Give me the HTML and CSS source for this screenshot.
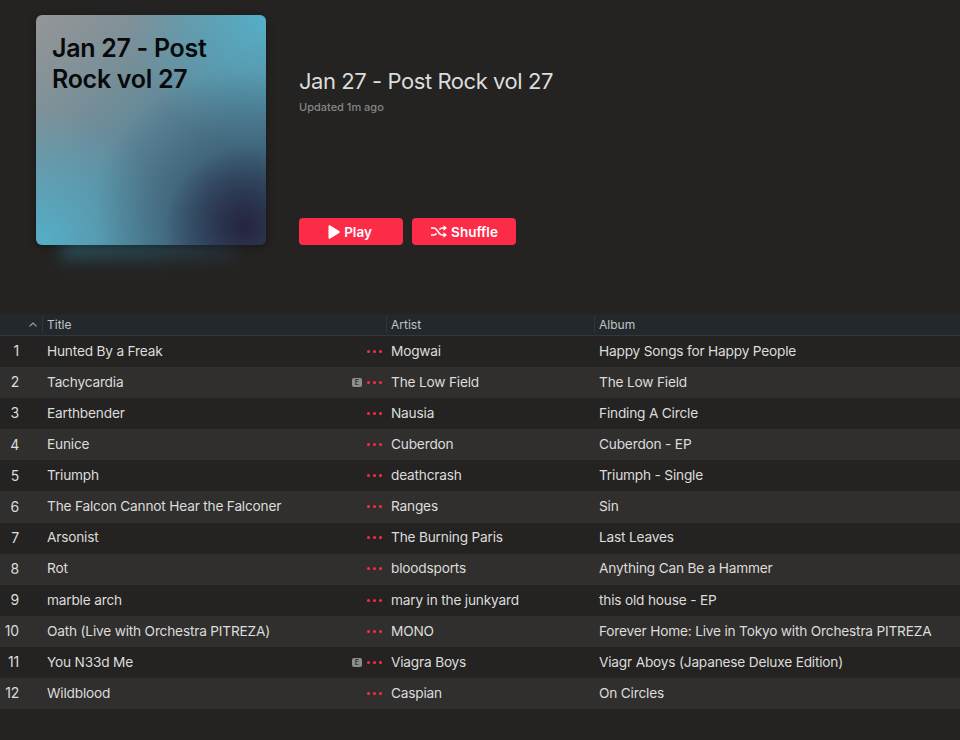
FILE: index.html
```html
<!DOCTYPE html>
<html lang="en">
<head>
  <meta charset="UTF-8">
  <title>Jan 27 - Post Rock vol 27</title>
  <link rel="stylesheet" href="styles.css">
</head>
<body>
  <!-- Playlist header -->
  <section class="hero">
    <div class="cover">
      <div class="cover-glow"></div>
      <div class="cover-art">Jan 27 - Post Rock vol 27</div>
    </div>
    <div class="hero-info">
      <h1>Jan 27 - Post Rock vol 27</h1>
      <p class="updated">Updated 1m ago</p>
      <div class="hero-buttons">
        <button class="btn btn-play">
          <svg width="12" height="14" viewBox="0 0 12 14"><path d="M.5 1.300C.5.400 1.400-.1 2.200.4l9 5.500c.7.500.7 1.700 0 2.200l-9 5.500c-.8.500-1.700 0-1.700-.9z" fill="#fff"/></svg>
          Play
        </button>
        <button class="btn btn-shuffle">
          <svg width="16" height="13" viewBox="0 0 16 13" fill="none" stroke="#fff" stroke-width="1.600"><path d="M0 3h2.500c1.500 0 2.300.6 3.100 1.700l2.800 3.800c.8 1.100 1.600 1.500 3.100 1.500H13"/><path d="M0 10h2.500c1.500 0 2.300-.5 3.100-1.500M8.400 4.500C9.200 3.500 10 3 11.500 3H13"/><path d="M12.500 .2v5.600L16 3zM12.500 7.200v5.600L16 10z" fill="#fff" stroke="none"/></svg>
          Shuffle
        </button>
      </div>
    </div>
  </section>

  <!-- Track list -->
  <div class="tracks">
    <div class="track-head">
      <div class="col-sort"><svg width="8" height="5" viewBox="0 0 8 5" fill="none" stroke="#a5a7a8" stroke-width="1.100"><path d="M.5 4.300 4 1l3.500 3.300"/></svg></div>
      <div class="col-title">Title</div>
      <div class="col-artist">Artist</div>
      <div class="col-album">Album</div>
    </div>
    <div class="row">
      <div class="num">1</div>
      <div class="title">Hunted By a Freak</div>
      <div class="dots"><i></i><i></i><i></i></div>
      <div class="artist">Mogwai</div>
      <div class="album">Happy Songs for Happy People</div>
    </div>
    <div class="row">
      <div class="num">2</div>
      <div class="title">Tachycardia</div>
      <span class="explicit">E</span>
      <div class="dots"><i></i><i></i><i></i></div>
      <div class="artist">The Low Field</div>
      <div class="album">The Low Field</div>
    </div>
    <div class="row">
      <div class="num">3</div>
      <div class="title">Earthbender</div>
      <div class="dots"><i></i><i></i><i></i></div>
      <div class="artist">Nausia</div>
      <div class="album">Finding A Circle</div>
    </div>
    <div class="row">
      <div class="num">4</div>
      <div class="title">Eunice</div>
      <div class="dots"><i></i><i></i><i></i></div>
      <div class="artist">Cuberdon</div>
      <div class="album">Cuberdon - EP</div>
    </div>
    <div class="row">
      <div class="num">5</div>
      <div class="title">Triumph</div>
      <div class="dots"><i></i><i></i><i></i></div>
      <div class="artist">deathcrash</div>
      <div class="album">Triumph - Single</div>
    </div>
    <div class="row">
      <div class="num">6</div>
      <div class="title">The Falcon Cannot Hear the Falconer</div>
      <div class="dots"><i></i><i></i><i></i></div>
      <div class="artist">Ranges</div>
      <div class="album">Sin</div>
    </div>
    <div class="row">
      <div class="num">7</div>
      <div class="title">Arsonist</div>
      <div class="dots"><i></i><i></i><i></i></div>
      <div class="artist">The Burning Paris</div>
      <div class="album">Last Leaves</div>
    </div>
    <div class="row">
      <div class="num">8</div>
      <div class="title">Rot</div>
      <div class="dots"><i></i><i></i><i></i></div>
      <div class="artist">bloodsports</div>
      <div class="album">Anything Can Be a Hammer</div>
    </div>
    <div class="row">
      <div class="num">9</div>
      <div class="title">marble arch</div>
      <div class="dots"><i></i><i></i><i></i></div>
      <div class="artist">mary in the junkyard</div>
      <div class="album">this old house - EP</div>
    </div>
    <div class="row">
      <div class="num">10</div>
      <div class="title">Oath (Live with Orchestra PITREZA)</div>
      <div class="dots"><i></i><i></i><i></i></div>
      <div class="artist">MONO</div>
      <div class="album">Forever Home: Live in Tokyo with Orchestra PITREZA</div>
    </div>
    <div class="row">
      <div class="num">11</div>
      <div class="title">You N33d Me</div>
      <span class="explicit">E</span>
      <div class="dots"><i></i><i></i><i></i></div>
      <div class="artist">Viagra Boys</div>
      <div class="album">Viagr Aboys (Japanese Deluxe Edition)</div>
    </div>
    <div class="row">
      <div class="num">12</div>
      <div class="title">Wildblood</div>
      <div class="dots"><i></i><i></i><i></i></div>
      <div class="artist">Caspian</div>
      <div class="album">On Circles</div>
    </div>
  </div>
</body>
</html>
```

FILE: styles.css
```css
* {
  margin: 0;
  padding: 0;
  box-sizing: border-box;
}

body {
  width: 960px;
  height: 740px;
  overflow: hidden;
  background: #242322;
  font-family: Inter, "Noto Sans", sans-serif;
  color: #dfdfde;
}

.hero {
  display: flex;
  height: 314px;
  padding: 15px 0 0 36px;
}

.cover {
  position: relative;
  width: 230px;
  height: 230px;
  flex-shrink: 0;
}

.cover-glow {
  position: absolute;
  left: 26px;
  right: 30px;
  bottom: -14px;
  height: 26px;
  background: linear-gradient(90deg, #2f7486, #2c5a6c 55%, #2a3140);
  opacity: .55;
  filter: blur(8px);
}

.cover-art {
  position: relative;
  width: 230px;
  height: 230px;
  padding: 18px 16px;
  border-radius: 6px;
  box-shadow: 0 2px 8px rgba(0, 0, 0, .35);
  font-size: 25px;
  font-weight: 600;
  line-height: 31px;
  letter-spacing: -.3px;
  color: #08090b;
  background:
    radial-gradient(circle at 91% 92%, #262540 0, rgba(38, 37, 64, .8) 6%, rgba(38, 37, 64, 0) 27%),
    radial-gradient(ellipse 62% 60% at 88% 84%, rgba(44, 72, 96, .8) 0, rgba(44, 72, 96, 0) 100%),
    radial-gradient(circle at 0 100%, #55afc8 0, rgba(85, 175, 200, 0) 42%),
    radial-gradient(circle at 100% 0, #55afc8 0, rgba(85, 175, 200, 0) 42%),
    linear-gradient(135deg, #959697 0, #7d9098 25%, #5f8899 50%, #41738b 100%);
}

.hero-info {
  display: flex;
  flex-direction: column;
  margin-left: 33px;
  padding-top: 51px;
}

.hero-info h1 {
  font-size: 22px;
  font-weight: 400;
  line-height: 31px;
  letter-spacing: -.44px;
  color: #dcdcdb;
}

.updated {
  margin-top: 2px;
  font-size: 11px;
  font-weight: 500;
  line-height: 16px;
  color: #868686;
}

.hero-buttons {
  display: flex;
  gap: 9px;
  margin-top: 103px;
}

.btn {
  display: flex;
  align-items: center;
  justify-content: center;
  gap: 4px;
  width: 104px;
  height: 27px;
  border: none;
  border-radius: 4px;
  background: #fc2c49;
  color: #fff;
  font-family: inherit;
  font-size: 13.500px;
  font-weight: 600;
}

.btn-play {
  padding-right: 2px;
}

.btn-shuffle {
  padding-left: 1px;
}

.track-head {
  display: grid;
  grid-template-columns: 43px 344px 208px 1fr;
  height: 22px;
  background: #22282c;
  border-bottom: 1px solid #32373b;
  font-size: 12px;
  color: #c2c3c3;
}

.track-head > div {
  border-right: 1px solid #30363b;
  margin: 2px 0;
  padding-left: 4px;
  line-height: 17px;
}

.track-head > .col-album {
  border-right: none;
}

.col-sort {
  display: flex;
  align-items: center;
  justify-content: flex-end;
  padding-right: 5px;
}

.row {
  display: flex;
  align-items: center;
  height: 31.100px;
  padding-bottom: 1.500px;
  font-size: 13.700px;
  letter-spacing: -.2px;
  color: #dcdcdb;
}

.row:nth-child(odd) {
  background: #302f2e;
}

.num {
  width: 47px;
  padding-right: 28px;
  font-size: 14px;
  text-align: right;
}

.title {
  flex: 1;
  white-space: nowrap;
}

.explicit {
  width: 10px;
  height: 9px;
  margin: 1px 5px 0 0;
  border-radius: 2px;
  background: #8e8e8d;
  color: #3a3a39;
  font-size: 7px;
  font-weight: 700;
  line-height: 9px;
  letter-spacing: 0;
  text-align: center;
}

.dots {
  display: flex;
  gap: 3px;
  width: 24px;
  margin-top: 1px;
}

.dots i {
  width: 3px;
  height: 3px;
  border-radius: 50%;
  background: #fa2d48;
}

.artist {
  width: 208px;
  flex-shrink: 0;
  white-space: nowrap;
}

.album {
  width: 361px;
  flex-shrink: 0;
  white-space: nowrap;
}
```
